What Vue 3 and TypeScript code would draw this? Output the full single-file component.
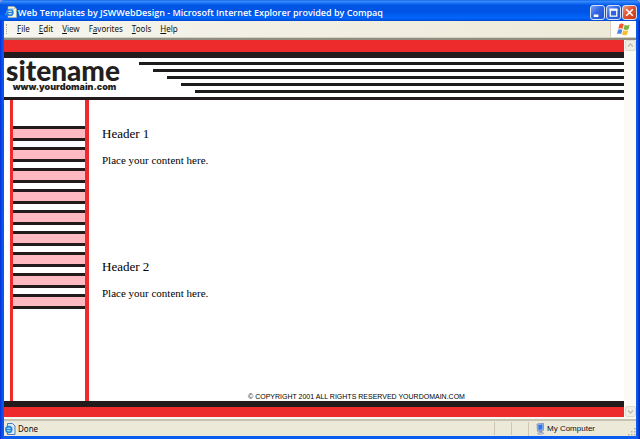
<script setup lang="ts">
interface MenuEntry {
  before: string
  key: string
  after: string
}

const menu: MenuEntry[] = [
  { before: '', key: 'F', after: 'ile' },
  { before: '', key: 'E', after: 'dit' },
  { before: '', key: 'V', after: 'iew' },
  { before: 'F', key: 'a', after: 'vorites' },
  { before: '', key: 'T', after: 'ools' },
  { before: '', key: 'H', after: 'elp' },
]

const navSlots = 9
const headerLines = 5

const sections: { title: string; text: string }[] = [
  { title: 'Header 1', text: 'Place your content here.' },
  { title: 'Header 2', text: 'Place your content here.' },
]
</script>

<template>
  <div class="window">
    <header class="titlebar">
      <svg class="page-icon" viewBox="0 0 12 12" aria-hidden="true">
        <path d="M3 0.500h6l2.500 2.500v8.500h-8.500z" fill="#f5f3e6" stroke="#b9b08a" stroke-width="0.600" />
        <path d="M9 0.500v2.500h2.500" fill="#d8cf9f" />
        <circle cx="5" cy="6.500" r="2.900" fill="none" stroke="#2484d8" stroke-width="1.600" />
        <path d="M2.500 6.500h5" stroke="#2484d8" stroke-width="1.300" />
        <path d="M0.600 9.200C1 5 5 2.400 8.800 3" fill="none" stroke="#65b5ee" stroke-width="0.900" />
      </svg>
      <h1 class="title">Web Templates by JSWWebDesign - Microsoft Internet Explorer provided by Compaq</h1>
      <div class="controls">
        <button class="control" type="button" aria-label="Minimize">
          <svg viewBox="0 0 14 14"><path d="M3 10.500h5" stroke="#fff" stroke-width="2.600" /></svg>
        </button>
        <button class="control" type="button" aria-label="Maximize">
          <svg viewBox="0 0 14 14"><path d="M3.500 4h7v7h-7z" fill="none" stroke="#fff" stroke-width="1.400" /><path d="M2.800 4h8.400" stroke="#fff" stroke-width="2.400" /></svg>
        </button>
        <button class="control close" type="button" aria-label="Close">
          <svg viewBox="0 0 14 14"><path d="M3.500 3.500l7 7M10.500 3.500l-7 7" stroke="#fff" stroke-width="1.800" /></svg>
        </button>
      </div>
    </header>

    <div class="frame">
      <nav class="menubar">
        <span class="grip"></span>
        <button v-for="m in menu" :key="m.key" class="menu-item" type="button">{{ m.before }}<u>{{ m.key }}</u>{{ m.after }}</button>
        <span class="brand">
          <svg viewBox="0 0 14 13" aria-hidden="true">
            <path d="M2.500 1.300C4 0.300 5.500 0.400 6.800 1.300L5.600 5.800C4.200 5 2.900 5 1.300 5.800z" fill="#ee5a2c" />
            <path d="M7.700 1.700C9.300 2.700 10.800 2.700 12.700 1.800L11.500 6.300C9.800 7.200 8.100 7.100 6.500 6.200z" fill="#7cb440" />
            <path d="M1 6.700C2.600 5.900 4 6 5.400 6.800L4.200 11C2.900 10.200 1.500 10.200 0 11z" fill="#4a84dc" />
            <path d="M6.200 7.200C7.800 8 9.500 8.100 11.200 7.300L10 11.700C8.400 12.600 6.700 12.500 5 11.600z" fill="#f7bd2c" />
          </svg>
        </span>
      </nav>

      <div class="viewport">
        <div class="site">
          <div class="band top"></div>
          <div class="masthead">
            <a class="logo" href="#">
              <span class="name">sitename</span>
              <span class="domain">www.yourdomain.com</span>
            </a>
            <div class="lines">
              <span v-for="n in headerLines" :key="n" class="line"></span>
            </div>
          </div>
          <div class="body">
            <ul class="sidebar">
              <li v-for="n in navSlots" :key="n" class="slot"></li>
            </ul>
            <main class="content">
              <section v-for="s in sections" :key="s.title" class="section">
                <h2>{{ s.title }}</h2>
                <p>{{ s.text }}</p>
              </section>
              <footer class="copyright">© COPYRIGHT 2001 ALL RIGHTS RESERVED YOURDOMAIN.COM</footer>
            </main>
          </div>
          <div class="band bottom"></div>
        </div>
        <div class="scrollbar">
          <button type="button" class="scroll" aria-label="Scroll up">
            <svg viewBox="0 0 9 9"><path d="M2 5.500l2.500-2.500 2.500 2.500" fill="none" stroke="#bcbbb0" stroke-width="1.400" /></svg>
          </button>
          <button type="button" class="scroll" aria-label="Scroll down">
            <svg viewBox="0 0 9 9"><path d="M2 3.500l2.500 2.500 2.500-2.500" fill="none" stroke="#bcbbb0" stroke-width="1.400" /></svg>
          </button>
        </div>
      </div>

      <div class="statusbar">
        <svg class="status-icon" viewBox="0 0 12 12" aria-hidden="true">
          <path d="M3.500 0.500h5l2.500 2.500v8.500h-7.500z" fill="#d9e9f8" stroke="#3d6fb5" stroke-width="0.900" />
          <circle cx="4.800" cy="6.500" r="2.900" fill="#a8dcf5" stroke="#2484d8" stroke-width="1.600" />
          <path d="M2.500 6.500h5" stroke="#2484d8" stroke-width="1.200" />
        </svg>
        <span class="message">Done</span>
        <span class="pane"></span>
        <span class="pane"></span>
        <span class="zone">
          <svg class="status-icon" viewBox="0 0 12 12" aria-hidden="true">
            <path d="M3 1l6.500-0.700v7l-6 1z" fill="#a9bce8" stroke="#6b7fc0" stroke-width="0.700" />
            <path d="M4.200 2l4.200-0.500v4.800l-3.900 0.600z" fill="#2c78ea" />
            <path d="M5 8.200l3-0.500 0.500 1.800-3 0.600z" fill="#8790a8" />
            <path d="M3.500 10l5.500-0.800 1 1.500-5.500 0.900z" fill="#c3cbe0" stroke="#7f8cad" stroke-width="0.500" />
          </svg>
          My Computer
        </span>
        <svg class="resize" viewBox="0 0 8 8" aria-hidden="true">
          <path d="M6 0h1.500v1.500H6zM3 3h1.500v1.500H3zM6 3h1.500v1.500H6zM0 6h1.500v1.500H0zM3 6h1.500v1.500H3zM6 6h1.500v1.500H6z" fill="#b5b19c" />
        </svg>
      </div>
    </div>
  </div>
</template>

<style>
body {
  margin: 0;
  background: #7f9de0;
}
</style>

<style scoped>
.window {
  box-sizing: border-box;
  display: flex;
  flex-direction: column;
  min-height: 100vh;
  padding: 0 4px 3px;
  overflow: hidden;
  background: linear-gradient(90deg, #0831d9, #0a5cf0 3px, #0a5cf0 calc(100% - 3px), #0020b0);
  border-radius: 5px 5px 0 0;
  font-family: "Noto Sans", sans-serif;
}

button {
  padding: 0;
  border: 0;
  background: none;
  font: inherit;
  color: inherit;
}

.titlebar {
  display: flex;
  align-items: center;
  height: 21px;
  margin: 0 -4px;
  padding: 0 3px 0 5px;
  background: linear-gradient(#0a57dd, #3b90ff 1px, #1f75f5 3px, #0056e4 5px, #0054e6 12px, #0265fd 18px, #0048d0 21px);
}

.page-icon {
  width: 12px;
  height: 12px;
  margin-top: 3px;
}

.title {
  flex: 1;
  margin: 4px 0 0 1px;
  color: #fff;
  font: 600 9px/16px "Open Sans", sans-serif;
  white-space: nowrap;
}

.controls {
  display: flex;
  gap: 1px;
  margin-top: 4px;
}

.control {
  box-sizing: border-box;
  width: 15px;
  height: 15px;
  border: 1px solid #d5e1fb;
  border-radius: 3px;
  background: linear-gradient(135deg, #7ba2f5, #2f65e2 45%, #2355d4);
}

.control svg {
  display: block;
}

.close {
  background: linear-gradient(135deg, #f0a080, #e0512e 45%, #cc3b13);
}

.frame {
  flex: 1;
  display: flex;
  flex-direction: column;
  background: #ece9d8;
}

.menubar {
  display: flex;
  align-items: center;
  gap: 9px;
  height: 16px;
  padding-left: 2px;
  border-bottom: 1px solid #d4d2c4;
  background: linear-gradient(90deg, #f6f5ee, #ece9d8);
  font-size: 8px;
  line-height: 14px;
  color: #111;
}

.grip {
  width: 1px;
  height: 10px;
  border-left: 1px dotted #a5a292;
}

.brand {
  display: flex;
  align-items: center;
  justify-content: center;
  align-self: stretch;
  width: 25px;
  margin-left: auto;
  border-left: 1px solid #d8d4c0;
  background: #fff;
}

.brand svg {
  width: 14px;
  height: 13px;
}

.viewport {
  flex: 1;
  display: flex;
  border-top: 2px solid #918d7e;
  border-bottom: 2px solid #f7f6f0;
  background: #fff;
}

.site {
  flex: 1;
  display: flex;
  flex-direction: column;
  min-width: 0;
}

.band {
  background: #ee2b2c;
}

.top {
  height: 12px;
  border-bottom: 6px solid #231a1c;
}

.bottom {
  height: 10px;
  border-top: 6px solid #231a1c;
}

.masthead {
  display: flex;
  height: 39px;
  border-bottom: 3px solid #231a1c;
}

.logo {
  display: flex;
  flex-direction: column;
  align-items: center;
  width: 121px;
  color: #231f20;
  text-decoration: none;
}

.name {
  margin-right: 3px;
  font: 900 28px/24px Lato, sans-serif;
}

.domain {
  font: 900 9px/10px Inter, sans-serif;
}

.lines {
  flex: 1;
  display: flex;
  flex-direction: column;
  gap: 4px;
  padding: 4px 0 0 14px;
}

.line {
  height: 3px;
  background: #1d1b1c;
}

.line:nth-child(2) {
  margin-left: 14px;
}

.line:nth-child(3) {
  margin-left: 28px;
}

.line:nth-child(4) {
  margin-left: 42px;
}

.line:nth-child(5) {
  margin-left: 56px;
}

.body {
  flex: 1;
  display: flex;
}

.sidebar {
  box-sizing: border-box;
  display: flex;
  flex-direction: column;
  gap: 6px;
  width: 79px;
  margin: 0 0 0 6px;
  padding: 26px 0 0;
  border-left: 3px solid #ee2b2c;
  border-right: 4px solid #ee2b2c;
  list-style: none;
}

.slot {
  height: 9px;
  border: solid #231a1c;
  border-width: 3px 0;
  background: #ffb9c0;
}

.content {
  flex: 1;
  display: flex;
  flex-direction: column;
  padding: 26px 0 0 13px;
  color: #000;
  font-family: "Liberation Serif", serif;
}

.section {
  height: 133px;
}

.section h2 {
  margin: 0 0 12px;
  font-size: 13px;
  font-weight: normal;
  line-height: 15px;
}

.section p {
  margin: 0;
  font-size: 11px;
  line-height: 15px;
}

.copyright {
  margin: auto 0 0 -13px;
  text-align: center;
  font: 7px/9px "Liberation Sans", sans-serif;
}

.scrollbar {
  display: flex;
  flex-direction: column;
  justify-content: space-between;
  width: 12px;
  background: #fbfaf5;
}

.scroll {
  box-sizing: border-box;
  width: 11px;
  height: 11px;
  margin-left: 1px;
  border: 1px solid #dddbcd;
  border-radius: 2px;
  background: #f0eee3;
}

.scroll svg {
  display: block;
}

.statusbar {
  display: flex;
  align-items: center;
  height: 15px;
  border-top: 2px solid #c6c3b2;
  background: #ece9d8;
  color: #111;
  font-size: 8px;
  line-height: 14px;
}

.status-icon {
  width: 12px;
  height: 12px;
}

.message {
  flex: 1;
  padding-left: 2px;
}

.pane {
  box-sizing: border-box;
  width: 17px;
  height: 13px;
  border-left: 1px solid #cbc7b4;
}

.zone {
  display: flex;
  align-items: center;
  gap: 1px;
  width: 94px;
  padding-left: 5px;
  border-left: 1px solid #cbc7b4;
  font-family: "Liberation Sans", sans-serif;
}

.resize {
  align-self: flex-end;
  width: 8px;
  height: 8px;
}
</style>
